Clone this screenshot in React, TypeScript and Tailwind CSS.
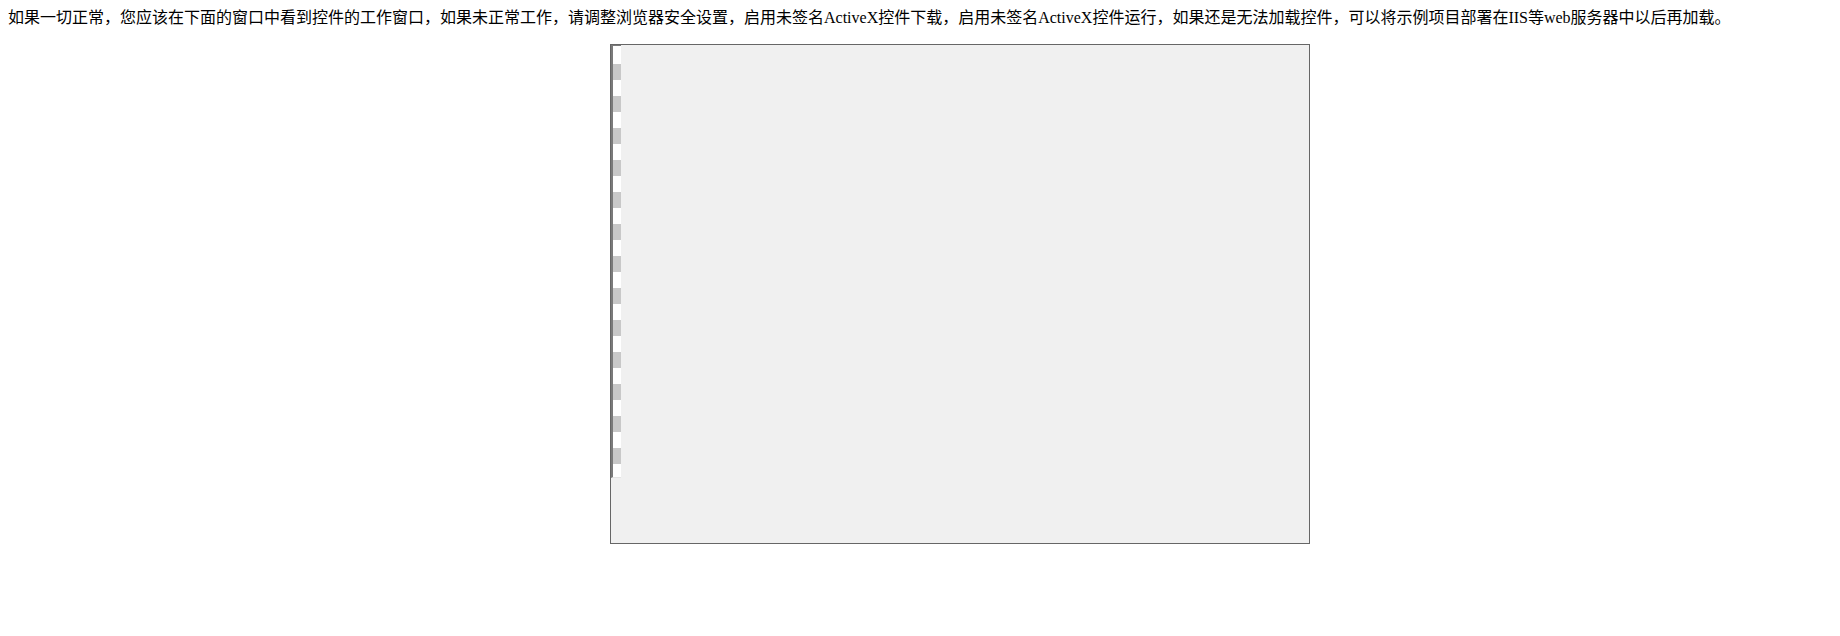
import React from 'react';

const notice =
  '如果一切正常，您应该在下面的窗口中看到控件的工作窗口，如果未正常工作，请调整浏览器安全设置，启用未签名ActiveX控件下载，启用未签名ActiveX控件运行，如果还是无法加载控件，可以将示例项目部署在IIS等web服务器中以后再加载。';

// placeholder drawn by the control before it has loaded
function ControlFrame() {
  const blocks = Array.from({ length: 13 });
  return (
    <div className="ml-[602px] mt-[16px] w-[700px] h-[500px] border border-[#666666] bg-[#f0f0f0] flex">
      <div className="w-[10px] h-[433px] border-l-2 border-t border-b border-l-[#7a7a7a] border-t-[#7a7a7a] border-b-[#e4e4e4] bg-white pt-[18px] flex flex-col gap-[16px]">
        {blocks.map((_, i) => (
          <div key={i} className="h-[16px] w-full bg-[#c8c8c8]" />
        ))}
      </div>
    </div>
  );
}

export default function App() {
  return (
    <div
      className="min-h-[636px] bg-white text-black pt-[8px] px-[8px]"
      style={{ fontFamily: '"Liberation Serif", "Noto Sans CJK SC", serif' }}
    >
      <p className="text-[16px] leading-[20px] whitespace-nowrap">{notice}</p>
      <ControlFrame />
    </div>
  );
}
